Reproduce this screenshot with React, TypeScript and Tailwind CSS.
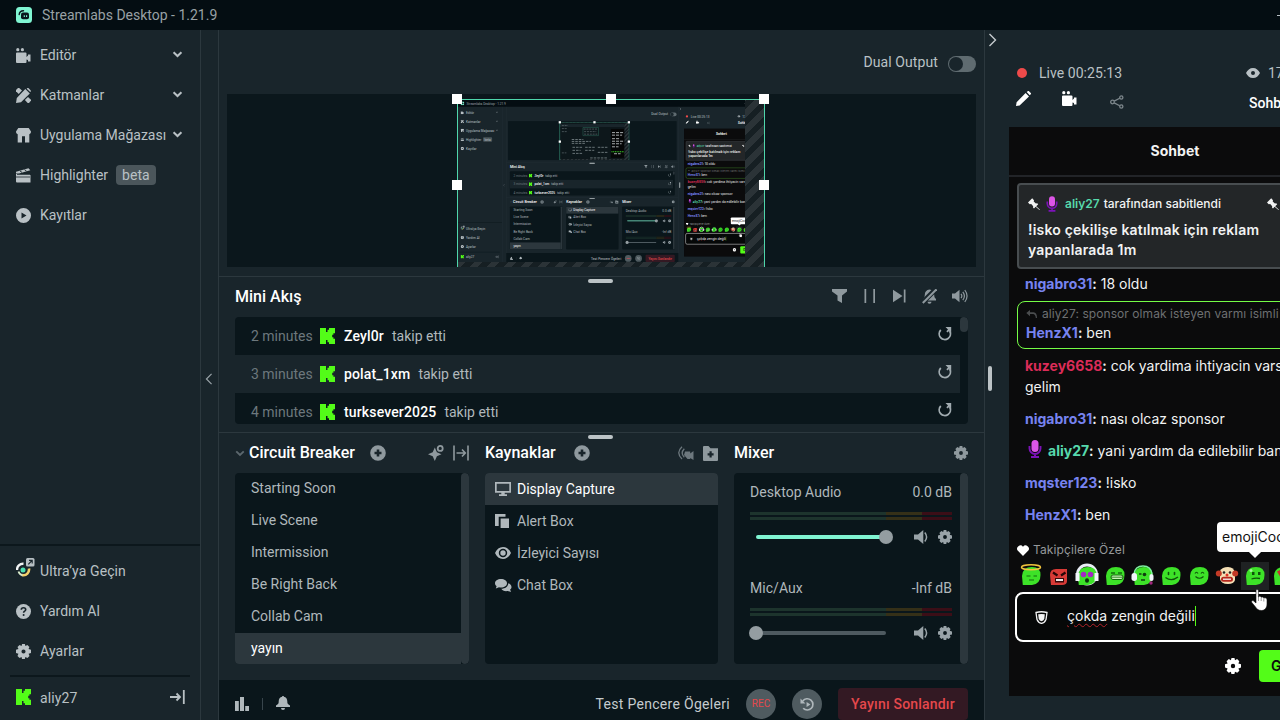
import React from "react";

type IconProps = { className?: string };

const svg = (viewBox: string, body: React.ReactNode) => {
  const Icon = ({ className = "size-3.5" }: IconProps) => (
    <svg viewBox={viewBox} className={`shrink-0 ${className}`} fill="currentColor">
      {body}
    </svg>
  );
  return Icon;
};

const CameraIcon = svg("0 0 15 15", (
  <>
    <circle cx="1.8" cy="1.700" r="1.600" />
    <circle cx="6.400" cy="1.700" r="1.600" />
    <path d="M1 4.500h8.500a1 1 0 0 1 1 1V9l1.500-1.500V6.500h2.500v7H12V12l-1.500-.5v2.500a1 1 0 0 1-1 1H1a1 1 0 0 1-1-1V5.500a1 1 0 0 1 1-1z" />
  </>
));

const PencilRulerIcon = svg("0 0 15 15", (
  <>
    <path d="M3.200 0 6 2.600 2.700 6 0 3.200a1 1 0 0 1 0-1.200L2 0z" />
    <path d="M12 9 15 11.800v.800L13 15h-1.300L8.900 12z" />
    <path d="M9.300 1 13.800 5.500 5 14.200 0 15l.8-5z" />
    <path d="m10.700.7.700-.6h1l2.400 2.300v1L14.200 4z" />
  </>
));

const StoreIcon = svg("0 0 15 15", (
  <path fillRule="evenodd" d="M2.300 0h10.400L15 3.600c0 1.500-.6 2.400-1.700 2.700V14.500H1.700V6.300C.6 6 0 5.100 0 3.600zM6 8.300v6.200h3V8.300z" />
));

const ClapperIcon = svg("0 0 15 15", (
  <>
    <path d="M0 3.800 12.500.2l1.800 2L3 5.500H0z" />
    <path d="M1 7h13.500v7.500H1a1 1 0 0 1-1-1V6h14v.3H1z" />
    <path d="m4 3 2 1.400M8.500 1.700l2 1.400" stroke="#19252b" strokeWidth=".9" />
    <path d="M0 9h14" stroke="#19252b" strokeWidth=".8" />
  </>
));

const PlayCircleIcon = svg("0 0 15 15", (
  <path fillRule="evenodd" d="M7.500 0a7.500 7.500 0 1 0 0 15 7.500 7.500 0 0 0 0-15zM5.500 4.500l5 3-5 3z" />
));

const ChevronIcon = svg("0 0 12 8", (
  <path d="m1.500 1.500 4.500 4.300 4.500-4.300" fill="none" stroke="currentColor" strokeWidth="2.300" />
));

const ThinChevronIcon = svg("0 0 9 14", (
  <path d="m1.500 1 6 6-6 6" fill="none" stroke="currentColor" strokeWidth="1.400" />
));

const GearIcon = svg("0 0 16 16", (
  <path fillRule="evenodd" d="M6.500 0h3l.5 2.200 2.100-1.100 2.200 2.200L13.400 5.400l2.600.8v3.400l-2.600.8 1 2.300-2.200 2.100-2.200-1-.6 2.200h-3L5.900 13.800l-2.100 1-2.200-2.100 1-2.300L0 9.600V6.200l2.600-.8-1-2.100 2.200-2.200L5.900 2.200zM8 5.800a2.200 2.200 0 1 0 0 4.400 2.200 2.200 0 0 0 0-4.400z" />
));

const KickIcon = svg("0 0 15 16", (
  <path d="M0 0h6v4h1.500V1.700H9V0h6v5.300h-1.600v1.500h-1.200v2.400h1.200v1.500H15V16H9v-1.700H7.500V12H6v4H0z" />
));

const PlusCircleIcon = svg("0 0 16 16", (
  <path fillRule="evenodd" d="M8 .2a7.800 7.800 0 1 0 0 15.600A7.800 7.800 0 0 0 8 .2zM6.700 4.500h2.600v2.200h2.200v2.600H9.300v2.200H6.700V9.300H4.500V6.700h2.200z" />
));

const HelpIcon = svg("0 0 15 15", (
  <>
    <circle cx="7.500" cy="7.500" r="7.500" />
    <path d="M5.300 5.800c0-1.400 1-2 2.200-2s2.200.7 2.200 1.900c0 1.500-2.100 1.500-2.100 3" fill="none" stroke="#19252b" strokeWidth="1.600" />
    <circle cx="7.600" cy="10.900" r="1" fill="#19252b" />
  </>
));

const FilterIcon = svg("0 0 15 14", <path d="M0 0h15v2.500L10 6.500V14L5.500 11.500v-5L0 2.500z" />);
const PauseIcon = svg("0 0 12 14", <path d="M.5 0H2.200v14H.5zM9.300 0H11v14H9.300z" />);
const NextIcon = svg("0 0 13 14", <path d="M0 .8 9.500 7 0 13.200zM10.800.5h1.700v13h-1.700z" />);
const BellOffIcon = svg("0 0 15 15", (
  <>
    <path d="M7.500.5c3 .3 4.700 2.400 4.700 5.200 0 2.400.7 3.200 1.800 4.300v1.500H1V10c1.100-1.100 1.800-1.900 1.800-4.300 0-2.800 1.700-4.900 4.700-5.200zM5.500 12.800h4a2 2 0 0 1-4 0z" />
    <path d="M14.500-.5 0 14" stroke="#19252b" strokeWidth="5" />
    <path d="M14.500.3.8 14" stroke="currentColor" strokeWidth="2" />
  </>
));
const VolumeIcon = svg("0 0 16 14", (
  <>
    <path d="M0 4.500h3L7.500.8v12.400L3 9.500H0z" />
    <path d="M9 4.800q1.700 2.200 0 4.400M10.800 2.800q3.200 4.200 0 8.400M12.800 1q4.500 6 0 12" fill="none" stroke="currentColor" strokeWidth="1.200" />
  </>
));
const SpeakerIcon = svg("0 0 15 14", (
  <>
    <path d="M0 4.500h4L9.300 0v14L4 9.500H0z" />
    <path d="M10.800 2.500q3.600 4.500 0 9" fill="none" stroke="currentColor" strokeWidth="1.500" />
  </>
));
const ReplayIcon = svg("0 0 14 15", (
  <>
    <path d="M2.800 4A5.600 5.600 0 1 0 11.600 5" fill="none" stroke="currentColor" strokeWidth="1.800" />
    <path d="M7.500 1h5.700v5.700l-1.900-1.900-1.700 1.700-1.300-1.300L10 3.500z" />
  </>
));
const SparkIcon = svg("0 0 16 16", (
  <>
    <path d="M6.800 2.500 8.900 7.200 13.500 9.200 8.900 11.300 6.800 16 4.700 11.300 0 9.200l4.700-2z" />
    <circle cx="12.200" cy="3.400" r="2.500" fill="none" stroke="currentColor" strokeWidth="1.800" />
  </>
));
const FitIcon = svg("0 0 16 16", (
  <path d="M1 .5v15M15 .5v15M3.500 8H12M9 4.500 12.300 8 9 11.500" fill="none" stroke="currentColor" strokeWidth="1.600" />
));
const BroadcastIcon = svg("0 0 16 14", (
  <>
    <path d="M4 .8q-6.500 6 0 12.200M6.300 2.800q-4.200 4.200 0 8.500" fill="none" stroke="currentColor" strokeWidth="1.300" />
    <path d="M7 5.500h5.200v2L15.500 5v9l-3.300-2v1H9.500L6 9z" />
  </>
));
const FolderPlusIcon = svg("0 0 15 15", (
  <path fillRule="evenodd" d="M1 0h4.500l2 2.300H15V14a1 1 0 0 1-1 1H1a1 1 0 0 1-1-1V1a1 1 0 0 1 1-1zm5.500 5.200v2H4.600v2.200h1.900v2h2.200v-2h1.900V7.200H8.700v-2z" />
));
const MonitorIcon = svg("0 0 16 14", (
  <path fillRule="evenodd" d="M0 0h16v10.700H9.700v1.600H12V14H4v-1.700h2.300v-1.600H0zm1.700 1.700V9h12.600V1.700z" />
));
const CopyIcon = svg("0 0 14 14", <path d="M0 0h10.500v2.800H3.700V12H0zM5.600 4.500H14V14H5.600z" />);
const EyeIcon = svg("0 0 16 12", (
  <>
    <path fillRule="evenodd" d="M8 0c3.600 0 6.300 2.300 8 6-1.700 3.700-4.400 6-8 6s-6.300-2.300-8-6c1.700-3.700 4.400-6 8-6zm0 1.800a4.200 4.200 0 1 0 0 8.400 4.200 4.200 0 0 0 0-8.400z" />
    <circle cx="8" cy="6" r="2.700" />
  </>
));
const EyeSolidIcon = svg("0 0 14 10", (
  <path fillRule="evenodd" d="M7 0c3.200 0 5.500 2 7 5-1.500 3-3.800 5-7 5S1.500 8 0 5c1.500-3 3.800-5 7-5zm0 3a2 2 0 1 0 0 4 2 2 0 0 0 0-4z" />
));
const ChatsIcon = svg("0 0 17 13", (
  <>
    <path d="M6 0c3.400 0 6 1.900 6 4.200 0 2.400-2.600 4.300-6 4.300-.7 0-1.400-.1-2-.2L.8 9.500l.8-2.300C.6 6.400 0 5.400 0 4.200 0 1.900 2.600 0 6 0z" />
    <path d="M13.200 4.300c2 .6 3.300 2 3.300 3.600 0 1-.5 2-1.400 2.600l.9 2.500-3.200-1c-3 .5-5.600-.4-6.500-2.200 3.900 0 6.900-2.200 6.900-5.500z" />
  </>
));
const StatsIcon = svg("0 0 14 14", <path d="M0 4h3.800v10H0zM5 0h4v14H5zM10.200 9H14v5h-3.800z" />);
const BellIcon = svg("0 0 14 14", (
  <path d="M6.200 0h1.600v.8c2.400.4 3.500 2.200 3.500 4.500 0 2.300.3 3 2.700 4.200v1.400H0V9.500c2.400-1.200 2.700-1.900 2.700-4.200 0-2.300 1.100-4.100 3.500-4.500zM5 12h4a2 2 0 0 1-4 0z" />
));
const HistoryIcon = svg("0 0 16 16", (
  <>
    <path d="M3 4.200A6 6 0 1 1 3.400 12" fill="none" stroke="currentColor" strokeWidth="1.800" />
    <path d="M.5 1.500v5.300h5.300zM7 5.300 11.200 8 7 10.700z" />
  </>
));
const LogoutIcon = svg("0 0 15 14", (
  <path d="M0 7h9.500M6.500 3.500 10 7l-3.500 3.500M13.800 0v14" fill="none" stroke="currentColor" strokeWidth="1.800" />
));
const PencilIcon = svg("0 0 15 15", (
  <path d="m9.600 2 3.400 3.400L3.600 14.400 0 15l.6-3.700zM10.700 1 12 0h.8L15 2.200V3l-1.300 1.300z" />
));
const ShareIcon = svg("0 0 14 14", (
  <g fill="none" stroke="currentColor" strokeWidth="1.300">
    <circle cx="2.500" cy="7" r="1.800" />
    <circle cx="11.300" cy="2.500" r="1.600" />
    <circle cx="11.300" cy="11.500" r="1.600" />
    <path d="m4.200 6.100 5.500-2.900M4.200 7.900l5.500 2.900" />
  </g>
));
const PinIcon = svg("0 0 12 12", (
  <path d="M4.200.3 6 2.200 5.700 3.500l2.200 2 1.300-.2 1 1-2 2L12 11.700l-.5.3L7.600 8.700 6 10.500l-1-1 .2-1.300-2-2.300-1.500.3L0 4.600z" />
));
const HeartIcon = svg("0 0 12 11", <path d="M6 11 .9 5.800A3.200 3.200 0 0 1 6 1.700a3.200 3.200 0 0 1 5.100 4.100z" />);
const ReplyIcon = svg("0 0 11 8", (
  <path d="M4 0v2.200h3.500Q11 2.400 11 8H9.800Q9.500 4.300 7 4H4v2.200L.3 3.100z" />
));

const MicBadge = ({ className = "" }: IconProps) => (
  <svg viewBox="0 0 14 18" className={`shrink-0 ${className}`}>
    <rect x="3.500" y="0" width="7" height="12" rx="3.500" fill="#dc55e6" />
    <path d="M1.500 6v2.500a5.500 5.500 0 0 0 11 0V6M7 14v2.500M3 17h8" fill="none" stroke="#7c12b8" strokeWidth="1.900" />
  </svg>
);

const UltraIcon = () => (
  <svg viewBox="0 0 19 19" className="mb-[7px] h-[19px] w-[19px] shrink-0">
    <circle cx="7" cy="12" r="2.500" fill="#4de0b0" />
    <path d="M1 12A6 6 0 0 1 7.500 5.800" fill="none" stroke="#f2f5f5" strokeWidth="2.400" />
    <path d="M13 10.500c.5 4-2.500 7.500-7 6.500" fill="none" stroke="#f3cf6b" strokeWidth="2.600" />
    <path d="M2.500 13.500q.8 3 4 3.800" fill="none" stroke="#d9eccc" strokeWidth="1.800" />
    <rect x="10" y="0" width="8.500" height="8.500" rx="1.500" fill="#b7bfc3" />
    <path d="M12.300 6.300 16 2.500M13 2.400h3.200v3.200" fill="none" stroke="#19252b" strokeWidth="1.100" />
  </svg>
);

const AppLogo = () => (
  <svg viewBox="0 0 16 16" className="size-4 shrink-0">
    <rect width="16" height="16" rx="3.500" fill="#80f5d2" />
    <path d="M3.200 7.500Q3.500 3.800 7.500 3.700" fill="none" stroke="#09161d" strokeWidth="1.400" strokeLinecap="round" />
    <rect x="5" y="5.500" width="8" height="6.800" rx="2" fill="#09161d" />
    <path d="M8.300 8.200v1.800M10.600 8.200v1.800" stroke="#80f5d2" strokeWidth="1.100" />
  </svg>
);

const HandCursor = () => (
  <svg viewBox="0 0 17 22" className="absolute left-[242px] top-[462px] z-20 h-[22px] w-[17px]">
    <path d="M5 1.500c0-1.300 2.400-1.300 2.400 0V8l1-.8c1 0 1.500.3 1.700 1l1-.3c1 0 1.500.5 1.600 1.200l1.300-.3c1.500.3 2 1 2 2.400V15c0 3.500-2 6.500-5.500 6.500-3 0-4.500-1.200-6-3.500L.8 13.500c-.8-1.500.7-2.500 1.900-1.500L5 14z" fill="#fff" stroke="#111" strokeWidth=".6" />
    <path d="M7.500 8v4M10.200 8.500V12M12.800 9.500V12.500" stroke="#555" strokeWidth=".6" />
  </svg>
);

const Emote = ({ kind }: { kind: string }) => (
  <svg viewBox="0 0 22 22" className="size-[22px] shrink-0 overflow-visible">
    {kind === "headset" && <circle cx="11" cy="9.500" r="9.500" fill="none" stroke="#e9edf5" strokeWidth="3" />}
    {kind === "rage" ? (
      <path d="M2 10q0-6 6-6h11v12q0 4-5 4H3z" fill="#d73a36" />
    ) : kind === "clown" ? (
      <path d="M4 6q2-4 8-4t7 6v7q-1 4-7 4-7 0-8-5z" fill="#f5dfb5" />
    ) : (
      <path d="M2 11Q2.500 2 12 2q8.500 0 8.500 8 0 9-8.500 10H2.800z" fill="#3de228" />
    )}
    {kind === "halo" && (
      <>
        <ellipse cx="11" cy="2.200" rx="9.500" ry="2.500" fill="none" stroke="#f1c33c" strokeWidth="1.500" />
        <path d="M6.500 11h4m3 0h3.500M9 15h5" stroke="#136b0c" strokeWidth="1.200" />
      </>
    )}
    {kind === "rage" && (
      <>
        <path d="m5 7.500 4.500 3m8-3-4.500 3" stroke="#260607" strokeWidth="2.200" />
        <path d="M7 13h9v4.500H7z" fill="#35090a" />
        <path d="M8 15h7" stroke="#fff" strokeWidth="1.800" />
      </>
    )}
    {kind === "headset" && (
      <>
        <path d="M-.5 8h4v8h-4zM18.500 8h4v8h-4z" fill="#f2f5fb" />
        <circle cx="7.500" cy="9.500" r="2.800" fill="#a326c4" />
        <circle cx="14.500" cy="9.500" r="2.800" fill="#a326c4" />
        <ellipse cx="11" cy="15.500" rx="2" ry="2.300" fill="#0a310b" />
      </>
    )}
    {kind === "grin" && (
      <>
        <path d="M7 8h4m3 0h4" stroke="#136b0c" strokeWidth="1.300" />
        <rect x="7" y="10" width="12" height="4.500" rx="2" fill="#c9f5b6" stroke="#136b0c" />
        <path d="M7 12.200h12" stroke="#136b0c" strokeWidth=".8" />
      </>
    )}
    {kind === "dj" && (
      <>
        <path d="M2 9q1-8 9-8 8 0 9 8" fill="none" stroke="#7ef2a0" strokeWidth="1.500" />
        <rect x="-.5" y="8" width="5.500" height="8" rx="2.700" fill="#f2f5fb" />
        <rect x="17.500" y="9" width="4" height="7" rx="2" fill="#f2f5fb" />
        <circle cx="12.500" cy="9.500" r="1.800" fill="#103c10" />
        <path d="M7 9h2.500M9 15h4" stroke="#103c10" strokeWidth="1.500" />
        <circle cx="19" cy="18" r="1.700" fill="#a3267e" />
      </>
    )}
    {kind === "smile" && (
      <>
        <path d="M8.500 7.500v2m6-2v2" stroke="#0f520a" strokeWidth="1.600" strokeLinecap="round" />
        <path d="M5.500 12.500q6 4.500 12.500-.5" fill="none" stroke="#0f520a" strokeWidth="1.300" />
      </>
    )}
    {kind === "happy" && (
      <>
        <path d="M7 8.500q1.500-2.500 3 0m3 0q1.500-2.500 3 0" fill="none" stroke="#0f520a" strokeWidth="1.200" />
        <path d="M7.500 11.500q4 3.500 8 0" fill="none" stroke="#0f520a" strokeWidth="1.200" />
      </>
    )}
    {kind === "clown" && (
      <>
        <circle cx="2.800" cy="8.500" r="3" fill="#c43a26" />
        <circle cx="19.200" cy="8.500" r="3" fill="#c43a26" />
        <circle cx="8" cy="7.500" r="1.300" fill="#222" />
        <circle cx="14" cy="7.500" r="1.300" fill="#222" />
        <circle cx="11" cy="10" r="1.500" fill="#de2f25" />
        <rect x="5" y="11.800" width="12" height="5" rx="2.500" fill="#b5281e" />
        <path d="M7 14.200h8" stroke="#fff" strokeWidth="1.200" />
      </>
    )}
    {kind === "cool" && (
      <>
        <path d="M8 7h2.500v3H8zM14 7h2.500v3H14z" fill="#0f520a" />
        <path d="M7.500 14q4-1.500 8.500-.5" fill="none" stroke="#0f520a" strokeWidth="1.300" />
        <circle cx="7" cy="5.500" r="1.500" fill="#a5f59a" />
      </>
    )}
    {kind === "love" && <path d="M5 6.500 8 5l3 1.500-3 5z" fill="#c3342f" />}
  </svg>
);

const mainNav = [
  { label: "Editör", icon: CameraIcon, chevron: true },
  { label: "Katmanlar", icon: PencilRulerIcon, chevron: true },
  { label: "Uygulama Mağazası", icon: StoreIcon, chevron: true },
  { label: "Highlighter", icon: ClapperIcon, badge: "beta" },
  { label: "Kayıtlar", icon: PlayCircleIcon },
];

const events = [
  { time: "2 minutes", name: "Zeyl0r" },
  { time: "3 minutes", name: "polat_1xm" },
  { time: "4 minutes", name: "turksever2025" },
];

const scenes = ["Starting Soon", "Live Scene", "Intermission", "Be Right Back", "Collab Cam", "yayın"];

const sources = [
  { label: "Display Capture", icon: MonitorIcon, size: "h-[14px] w-4" },
  { label: "Alert Box", icon: CopyIcon, size: "size-3.5" },
  { label: "İzleyici Sayısı", icon: EyeIcon, size: "h-3 w-4" },
  { label: "Chat Box", icon: ChatsIcon, size: "h-[13px] w-[17px]" },
];

const emotes = ["halo", "rage", "headset", "grin", "dj", "smile", "happy", "clown", "cool", "love"];

const Sidebar = () => (
  <aside className="flex w-[201px] shrink-0 flex-col border-r border-[#2c383e] text-[#b9c1c5]">
    <nav className="flex flex-col pt-[5px]">
      {mainNav.map(({ label, icon: Icon, chevron, badge }) => (
        <div key={label} className="flex h-10 items-center pl-4 pr-[17px]">
          <Icon className="size-[15px]" />
          <span className="ml-[9px] whitespace-nowrap">{label}</span>
          {badge && <span className="ml-2 flex h-5 items-center rounded bg-[#4b565b] px-1.5">{badge}</span>}
          {chevron && <ChevronIcon className="mb-0.5 ml-auto h-[7px] w-[11px]" />}
        </div>
      ))}
    </nav>
    <div className="mt-auto flex flex-col border-t-2 border-[#0c171c] pt-[5px]">
      <div className="flex h-10 items-center pl-4">
        <UltraIcon />
        <span className="ml-[5px] tracking-[0.1px]">Ultra’ya Geçin</span>
      </div>
      <div className="flex h-10 items-center pl-4">
        <HelpIcon className="size-[15px]" />
        <span className="ml-[9px]">Yardım Al</span>
      </div>
      <div className="flex h-10 items-center pl-4">
        <GearIcon className="size-[15px]" />
        <span className="ml-[9px] tracking-[0.1px]">Ayarlar</span>
      </div>
    </div>
    <div className="mx-2.5 mt-1 flex h-[45px] shrink-0 items-center border-t-2 border-[#0c171c] pb-[3px] pl-1.5 pr-[5px]">
      <KickIcon className="h-4 w-[15px] text-[#53fc18]" />
      <span className="ml-[9px] mt-px tracking-[0.1px]">aliy27</span>
      <LogoutIcon className="ml-auto h-3.5 w-[15px]" />
    </div>
  </aside>
);

// Innermost repeat of the window, too small to hold anything but blocks.
const TinyDesktop = () => (
  <svg viewBox="0 0 1280 720" className="h-[720px] w-[1280px]">
    <rect width="1280" height="720" fill="#0d171b" />
    <rect y="30" width="1280" height="60" fill="#19252b" />
    <path d="M235 336h230M235 374h380M235 412h260M250 490h190M250 550h160M250 610h190M500 490h210M500 550h180M750 490h190M750 590h190M600 700h340" stroke="#7e898d" strokeWidth="16" strokeDasharray="50 20" />
    <path d="M40 60h120M40 120h100M40 180h110M40 600h90M470 130h270M480 180h240M480 230h260" stroke="#5c676c" strokeWidth="14" strokeDasharray="40 16" />
    <rect x="1009" y="127" width="271" height="570" fill="#050606" />
    <path d="M1030 200h220M1030 250h200M1030 320h140M1030 370h240M1030 420h190M1030 480h130M1070 617h130" stroke="#b9bdbf" strokeWidth="18" strokeDasharray="60 20" />
    <path d="M1020 577h250" stroke="#3de228" strokeWidth="20" strokeDasharray="20 14" />
    <path d="M457 99h307v160H457z" fill="none" stroke="#357c69" strokeWidth="8" />
  </svg>
);

// The display capture shows the whole window again, so it is drawn recursively.
const Preview = ({ depth }: { depth: number }) => (
  <div className="relative mx-2 h-[173px] bg-[#0b171c]">
    <div className="h-full pl-[230px] pt-[5px]">
      <div className="h-[168px] w-[308px] overflow-hidden border-x border-t border-[#4fd6ab] bg-[repeating-linear-gradient(135deg,#161f23_0_6px,#2b3337_6px_12px)]">
        <div className="-ml-px h-[162px] w-[288px] overflow-hidden">
          <div className="h-[720px] w-[1280px] origin-top-left scale-[0.225]">
            {depth < 1 ? <Desktop depth={depth + 1} /> : <TinyDesktop />}
          </div>
        </div>
      </div>
    </div>
    <span className="absolute left-[230px] top-[5px] h-[168px] w-px bg-[#4fd6ab]" />
    <span className="absolute left-[225px] top-0 size-2.5 bg-white" />
    <span className="absolute left-[379px] top-0 size-2.5 bg-white" />
    <span className="absolute left-[532px] top-0 size-2.5 bg-white" />
    <span className="absolute left-[225px] top-[86px] size-2.5 bg-white" />
    <span className="absolute left-[532px] top-[86px] size-2.5 bg-white" />
  </div>
);

const DragHandle = () => <div className="ml-[369px] mt-0.5 h-1 w-[25px] rounded-full bg-[#bcc3c6]" />;

const MiniFeed = () => (
  <section className="flex h-[156px] flex-col border-t border-[#2c383e]">
    <DragHandle />
    <div className="flex h-[27px] items-center pl-4 pr-4 text-[#8f999e]">
      <h2 className="text-[16px] font-medium text-white">Mini Akış</h2>
      <div className="mb-px ml-auto flex items-center">
        <FilterIcon className="mr-[17px] h-3.5 w-[15px]" />
        <PauseIcon className="mr-[17px] h-3.5 w-3" />
        <NextIcon className="mr-4 h-3.5 w-[13px]" />
        <BellOffIcon className="mr-[15px] size-[15px]" />
        <VolumeIcon className="h-3.5 w-4" />
      </div>
    </div>
    <div className="mx-4 mt-[7px] flex h-[107px] overflow-hidden rounded bg-[#0a161b]">
      <div className="flex-1">
        {events.map((event, index) => (
          <div key={event.name} className={`flex h-[38px] items-center pl-4 pr-2 ${index === 1 ? "bg-[#19252b]" : ""}`}>
            <span className="w-[69px] text-[#6d787d]">{event.time}</span>
            <KickIcon className="h-4 w-[15px] text-[#53fc18]" />
            <span className="ml-[9px] font-medium tracking-[0.15px] text-white">{event.name}</span>
            <span className="ml-2 text-[#b0b8bc]">takip etti</span>
            <ReplayIcon className="mb-[5px] ml-auto h-[15px] w-3.5 text-[#a1abb0]" />
          </div>
        ))}
      </div>
      <div className="w-2">
        <div className="h-[15px] rounded-full bg-[#2c373d]" />
      </div>
    </div>
  </section>
);

const Scenes = () => (
  <div className="w-[234px]">
    <div className="flex h-[34px] items-center pb-1.5 text-[#8f999e]">
      <ChevronIcon className="h-[7px] w-2.5 text-[#5c686e]" />
      <h2 className="ml-1 text-[16px] font-medium text-white">Circuit Breaker</h2>
      <PlusCircleIcon className="ml-[15px] size-4" />
      <SparkIcon className="ml-auto size-4" />
      <FitIcon className="ml-[9px] size-4" />
    </div>
    <div className="flex h-[191px] overflow-hidden rounded bg-[#0a161b]">
      <div className="flex-1">
        {scenes.map((scene) => (
          <div
            key={scene}
            className={`flex h-8 items-center pb-0.5 pl-4 ${scene === "yayın" ? "bg-[#2c373d] text-white" : "text-[#b0b8bc]"}`}
          >
            {scene}
          </div>
        ))}
      </div>
      <div className="w-2 rounded bg-[#2c373d]" />
    </div>
  </div>
);

const Sources = () => (
  <div className="w-[233px]">
    <div className="flex h-[34px] items-center pb-1.5 text-[#8f999e]">
      <h2 className="text-[16px] font-medium text-white">Kaynaklar</h2>
      <PlusCircleIcon className="ml-[18px] size-4" />
      <BroadcastIcon className="ml-auto h-3.5 w-4 text-[#6d787e]" />
      <FolderPlusIcon className="ml-[9px] size-[15px]" />
    </div>
    <div className="h-[191px] overflow-hidden rounded bg-[#0a161b]">
      {sources.map(({ label, icon: Icon, size }, index) => (
        <div key={label} className={`flex h-8 items-center pl-2.5 ${index === 0 ? "bg-[#2c373d] text-white" : "text-[#b0b8bc]"}`}>
          <span className="flex w-[22px] text-[#b0b8bc]">
            <Icon className={size} />
          </span>
          <span>{label}</span>
        </div>
      ))}
    </div>
  </div>
);

const Channel = ({ name, level, full }: { name: string; level: string; full?: boolean }) => (
  <div className="flex h-24 flex-col pt-[9px]">
    <div className="flex h-5 items-center justify-between text-[#b0b8bc]">
      <span className="tracking-[0.05px]">{name}</span>
      <span>{level}</span>
    </div>
    <div className="mt-[10px] flex flex-col gap-0.5">
      {[0, 1].map((bar) => (
        <div key={bar} className="flex h-[3px]">
          <span className="w-[136px] bg-[#1d342d]" />
          <span className="w-9 bg-[#353018]" />
          <span className="w-[30px] bg-[#3b0e17]" />
        </div>
      ))}
    </div>
    <div className="mt-[10px] flex items-center text-[#99a3a8]">
      <div className={`relative ml-1.5 h-1 w-[130px] rounded-full ${full ? "bg-[#80f5d2]" : "bg-[#4e5a60]"}`}>
        <span className={`absolute -top-[5px] size-3.5 rounded-full bg-[#949da1] ${full ? "left-[123px]" : "-left-[7px]"}`} />
      </div>
      <SpeakerIcon className="ml-7 h-3.5 w-[15px]" />
      <GearIcon className="ml-[9px] size-3.5" />
    </div>
  </div>
);

const Mixer = () => (
  <div className="w-[234px]">
    <div className="flex h-[34px] items-center justify-between pb-1.5 text-[#8f999e]">
      <h2 className="text-[16px] font-medium text-white">Mixer</h2>
      <GearIcon className="mb-px size-3.5" />
    </div>
    <div className="flex h-[191px] overflow-hidden rounded bg-[#0a161b]">
      <div className="flex-1 pl-4 pr-2">
        <Channel name="Desktop Audio" level="0.0 dB" full />
        <Channel name="Mic/Aux" level="-Inf dB" />
      </div>
      <div className="w-2 rounded-full bg-[#2c373d]" />
    </div>
  </div>
);

const Footer = () => (
  <footer className="flex h-10 items-end bg-[#0a161b] pl-4 pr-4">
    <div className="flex h-8 flex-1 items-center text-[#b0b8bc]">
      <StatsIcon className="size-3.5" />
      <span className="ml-[13px] h-3 w-px bg-[#38454c]" />
      <BellIcon className="mb-0.5 ml-[13px] size-3.5" />
      <span className="ml-auto tracking-[0.3px] text-[#c5cbce]">Test Pencere Ögeleri</span>
      <span className="ml-4 flex size-[30px] items-center justify-center rounded-full bg-[#4f5b60] text-[10px] text-[#e5484c]">REC</span>
      <span className="ml-4 flex size-[30px] items-center justify-center rounded-full bg-[#4f5b60]">
        <HistoryIcon className="size-[15px]" />
      </span>
      <span className="ml-4 flex h-8 w-[130px] items-center justify-center rounded bg-[#331923] font-medium tracking-[0.2px] text-[#e5484c]">
        Yayını Sonlandır
      </span>
    </div>
  </footer>
);

const Message = ({ user, color, badge, children }: { user: string; color: string; badge?: boolean; children: React.ReactNode }) => (
  <div className="flex px-4 pb-1.5 pt-[5px] leading-[21px]">
    {badge && <MicBadge className="ml-[3px] mr-[6px] h-[18px] w-3.5" />}
    <p className="whitespace-nowrap">
      <span className={`font-bold ${color}`}>{user}</span>
      <span className="font-semibold">:</span> {children}
    </p>
  </div>
);

const Chat = () => (
  <div className="relative flex h-[569px] w-[332px] shrink-0 flex-col bg-[#0b0b0c] font-[Inter,sans-serif] text-[14px] text-[#f2f3f3]">
    <h3 className="flex h-[50px] shrink-0 items-center justify-center border-b-2 border-[#222428] font-bold">Sohbet</h3>
    <div className="ml-2 mt-[6px] h-[86px] shrink-0 rounded border-2 border-[#484d50] bg-[#232628] px-[9px] pt-[9px]">
      <div className="flex h-[18px] items-center pt-px text-[12px] font-medium">
        <PinIcon className="mr-[6px] size-3" />
        <MicBadge className="mr-[7px] h-4 w-3" />
        <span className="font-semibold text-[#57d9ac]">aliy27</span>
        <span className="ml-1 flex-1">tarafından sabitlendi</span>
        <PinIcon className="mr-[51px] size-3" />
      </div>
      <p className="mt-2 w-[270px] text-[14px] font-semibold leading-5 tracking-[0.2px]">
        !isko çekilişe katılmak için reklam
        <br />
        yapanlarada 1m
      </p>
    </div>
    <div className="-mt-px flex flex-col">
      <Message user="nigabro31" color="text-[#7783f0]">18 oldu</Message>
      <div className="my-px ml-2 flex h-12 flex-col rounded-lg border border-[#75fd46] pl-2 pt-0.5">
        <div className="flex h-5 items-center whitespace-nowrap text-[12px] tracking-[0.07px] text-[#6e7072]">
          <ReplyIcon className="mr-[5px] h-2 w-[11px] text-[#4b4d4f]" />
          aliy27: sponsor olmak isteyen varmı isimli
        </div>
        <p className="leading-[18px]">
          <span className="font-bold text-[#7783f0]">HenzX1</span>
          <span className="font-semibold">:</span> ben
        </p>
      </div>
      <Message user="kuzey6658" color="text-[#dc2c58]">
        cok yardima ihtiyacin varsa
        <br />
        gelim
      </Message>
      <Message user="nigabro31" color="text-[#7783f0]">nası olcaz sponsor</Message>
      <Message user="aliy27" color="text-[#57d9ac]" badge>yani yardım da edilebilir bana</Message>
      <Message user="mqster123" color="text-[#7783f0]">!isko</Message>
      <Message user="HenzX1" color="text-[#7783f0]">ben</Message>
    </div>
    <div className="ml-2 mt-2.5 flex h-[18px] items-center text-[12px] tracking-[0.1px] text-[#96999b]">
      <HeartIcon className="mr-1 h-[11px] w-3 text-white" />
      Takipçilere Özel
    </div>
    <div className="ml-2 mt-[3px] flex h-7 items-center">
      {emotes.map((kind) => (
        <span key={kind} className={`flex size-7 shrink-0 items-center justify-center ${kind === "cool" ? "bg-[#1f2223]" : ""}`}>
          <Emote kind={kind} />
        </span>
      ))}
    </div>
    <div className="ml-1.5 mt-0.5 flex h-[50px] items-center rounded-lg border-2 border-white bg-[#060808] pl-[18px]">
      <svg viewBox="0 0 13 13" className="mt-px size-[13px]">
        <path d="M1 1.500q5.500-1.500 11 0L11 8.500q-1.500 3.500-4.500 3.900Q3.500 12 2 8.500z" fill="none" stroke="#f3f4f4" strokeWidth="1.300" />
        <path d="M3.200 3.300q3.300-.8 6.600 0L9.300 8q-1 2-2.800 2.300Q4.700 10 3.700 8z" fill="#f3f4f4" />
      </svg>
      <p className="mb-[3px] ml-[19px] border-r border-[#53fc18] text-[14px]">
        <span className="underline decoration-[#b5252b] decoration-wavy decoration-1 underline-offset-2">çokda</span> zengin değili
      </p>
    </div>
    <div className="mt-2 flex h-8 items-center">
      <GearIcon className="ml-[216px] size-4 text-white" />
      <button className="ml-[18px] h-8 w-[74px] rounded bg-[#53fc18] text-[14px] font-semibold text-[#0b0b0c]">Gönder</button>
    </div>
    <div className="absolute left-[208px] top-[395px] z-10 flex h-[30px] items-center rounded-sm bg-white px-[5px] text-[14px] text-[#111]">
      emojiCool
      <span className="absolute -bottom-1 left-[33px] size-2.5 rotate-45 bg-white" />
    </div>
    <HandCursor />
  </div>
);

const LivePanel = () => (
  <section className="flex flex-1 flex-col overflow-hidden">
    <div className="flex h-[30px] items-start pl-[3px] pt-[3px]">
      <ThinChevronIcon className="h-3.5 w-[9px] text-[#c5cbce]" />
    </div>
    <div className="ml-8 flex h-[26px] shrink-0 items-center text-[#b9c1c5]">
      <span className="size-2.5 shrink-0 rounded-full bg-[#ee4a4a]" />
      <span className="ml-3 w-[207px] shrink-0 tracking-[0.05px]">Live 00:25:13</span>
      <EyeSolidIcon className="h-2.5 w-3.5" />
      <span className="ml-2">17</span>
    </div>
    <div className="ml-[31px] flex h-7 shrink-0 items-center text-white">
      <PencilIcon className="mb-1 mr-[31px] size-[15px]" />
      <CameraIcon className="mb-1 mr-[33px] size-[15px]" />
      <ShareIcon className="mt-1 size-3.5 text-[#7d878c]" />
      <span className="ml-[125px] mt-1.5 font-medium">Sohbet</span>
    </div>
    <div className="ml-6 mt-[13px]">
      <Chat />
    </div>
  </section>
);

const Desktop = ({ depth }: { depth: number }) => (
  <div className="flex h-[720px] w-[1280px] flex-col overflow-hidden bg-[#19252b] font-[Roboto,sans-serif] text-[14px] leading-5">
    <header className="flex h-[30px] shrink-0 items-center bg-[#040d12] pl-4 text-[#99a1a5]">
      <AppLogo />
      <span className="ml-2.5">Streamlabs Desktop - 1.21.9</span>
      <span className="ml-auto h-px w-[3px] bg-[#b9c1c5]" />
    </header>
    <div className="flex min-h-0 flex-1">
      <Sidebar />
      <div className="flex w-[18px] shrink-0 items-center justify-center border-r border-[#2c383e] pr-0.5 text-[#99a3a8]">
        <ThinChevronIcon className="mt-[7px] h-3 w-2 rotate-180" />
      </div>
      <main className="flex w-[766px] shrink-0 flex-col border-r border-[#2c383e]">
        <div className="flex h-16 shrink-0 items-center justify-end pr-2 text-[#b9c1c5]">
          <span className="mr-2.5 tracking-[0.1px]">Dual Output</span>
          <span className="mt-1 flex h-4 w-7 items-center rounded-full bg-[#5f6b70] px-px">
            <span className="size-3.5 rounded-full bg-[#19252b]" />
          </span>
        </div>
        <Preview depth={depth} />
        <div className="h-[9px] shrink-0" />
        <MiniFeed />
        <section className="flex h-[248px] shrink-0 flex-col border-t border-[#2c383e]">
          <DragHandle />
          <div className="flex gap-4 px-4">
            <Scenes />
            <Sources />
            <Mixer />
          </div>
        </section>
        <Footer />
      </main>
      <div className="-mr-2 flex w-2 shrink-0 items-center pl-[3px]">
        <span className="mt-[6px] h-[25px] w-1 rounded-full bg-[#bcc3c6]" />
      </div>
      <LivePanel />
    </div>
  </div>
);

const App = () => <Desktop depth={0} />;

export default App;
